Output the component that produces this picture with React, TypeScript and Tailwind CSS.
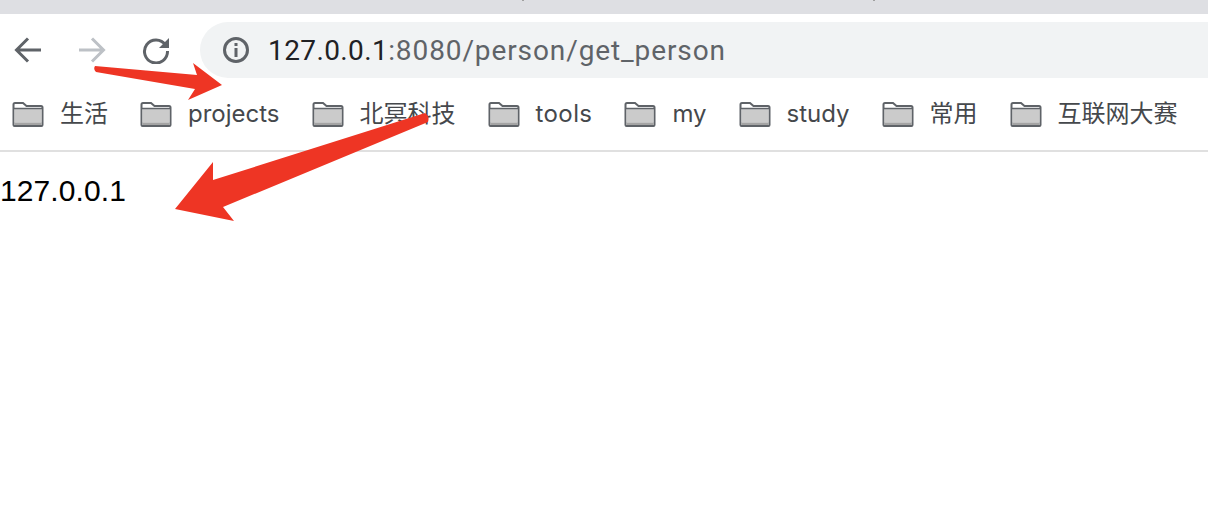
const bookmarks = ["生活", "projects", "北冥科技", "tools", "my", "study", "常用", "互联网大赛"];

function Folder() {
  return (
    <svg width="32" height="26" viewBox="0 0 32 26" className="shrink-0">
      <path d="M1.5 24V3.500Q1.500 2 3 2H11L14.500 5H29Q30.500 5 30.500 6.500V24Q30.500 25 29.500 25H2.500Q1.500 25 1.500 24Z" fill="#fff" stroke="#5f6368" strokeWidth="2" />
      <rect x="2.500" y="8" width="27" height="13.500" fill="#cbcbcb" />
      <rect x="2.500" y="21.500" width="27" height="2.500" fill="#a4a4a4" />
      <path d="M2 7.500H30" stroke="#5f6368" strokeWidth="1.500" />
    </svg>
  );
}

export default function App() {
  return (
    <div className="relative h-[520px] w-[1208px] overflow-hidden bg-white font-['Inter','Noto_Sans_CJK_SC',sans-serif]">
      <div className="h-[14px] bg-[#dedfe3]" />
      <div className="flex h-[72px] items-center">
        <div className="flex w-[200px] items-center pl-[14px]">
          <svg width="28" height="28" viewBox="0 0 28 28" className="mr-[36px]">
            <path d="M27 14H3M14 2.500 2.500 14 14 25.500" fill="none" stroke="#5f6368" strokeWidth="3" />
          </svg>
          <svg width="28" height="28" viewBox="0 0 28 28" className="mr-[36px]">
            <path d="M1 14H25M14 2.500 25.500 14 14 25.500" fill="none" stroke="#bdc1c6" strokeWidth="3" />
          </svg>
          <svg width="28" height="28" viewBox="0 0 28 28">
            <path d="M23.500 9A11.500 11.500 0 1 0 25.500 15" fill="none" stroke="#5f6368" strokeWidth="3" />
            <path d="M27 2V12H17Z" fill="#5f6368" />
          </svg>
        </div>
        <div className="flex h-[56px] flex-1 items-center rounded-l-[28px] bg-[#f1f3f4] pl-[22px]">
          <svg width="28" height="28" viewBox="0 0 28 28" className="mr-[18px]">
            <circle cx="14" cy="14" r="11.500" fill="none" stroke="#5f6368" strokeWidth="3" />
            <rect x="12.500" y="7" width="3" height="3" fill="#5f6368" />
            <rect x="12.500" y="12" width="3" height="9" fill="#5f6368" />
          </svg>
          <span className="pt-[2px] font-['Roboto',sans-serif] text-[28px] tracking-[0.9px] text-[#5f6368]">
            <span className="tracking-[0.4px] text-[#202124]">127.0.0.1</span>:8080/person/get_person
          </span>
        </div>
      </div>
      <div className="flex h-[66px] items-center gap-[32px] border-b-2 border-[#e0e0e0] pb-[8px] pl-[12px]">
        {bookmarks.map((b) => (
          <div key={b} className="flex items-center gap-[16px]">
            <Folder />
            <span className={b === "tools" ? "text-[24px] leading-none tracking-[0.4px] text-[#45484c]" : "text-[24px] leading-none text-[#45484c]"}>{b}</span>
          </div>
        ))}
      </div>
      <div className="pt-[20px] font-['Liberation_Sans',sans-serif] text-[30px] leading-[38px] tracking-[0.1px] text-black">127.0.0.1</div>

      <span className="absolute left-[522px] top-0 h-[1px] w-[2px] bg-[#a0a0a0]" />
      <span className="absolute left-[873px] top-0 h-[1px] w-[2px] bg-[#a0a0a0]" />
      <svg width="1208" height="520" className="pointer-events-none absolute left-0 top-0">
        <path d="M95 66 197 75 193 63 222 85 188 100 195 89 96 72Q93 69 95 66Z" fill="#ee3524" />
        <path d="M425 113 213 180 213 162 175 209 234 221 223 207 428 122Q430 116 425 113Z" fill="#ee3524" />
      </svg>
    </div>
  );
}
